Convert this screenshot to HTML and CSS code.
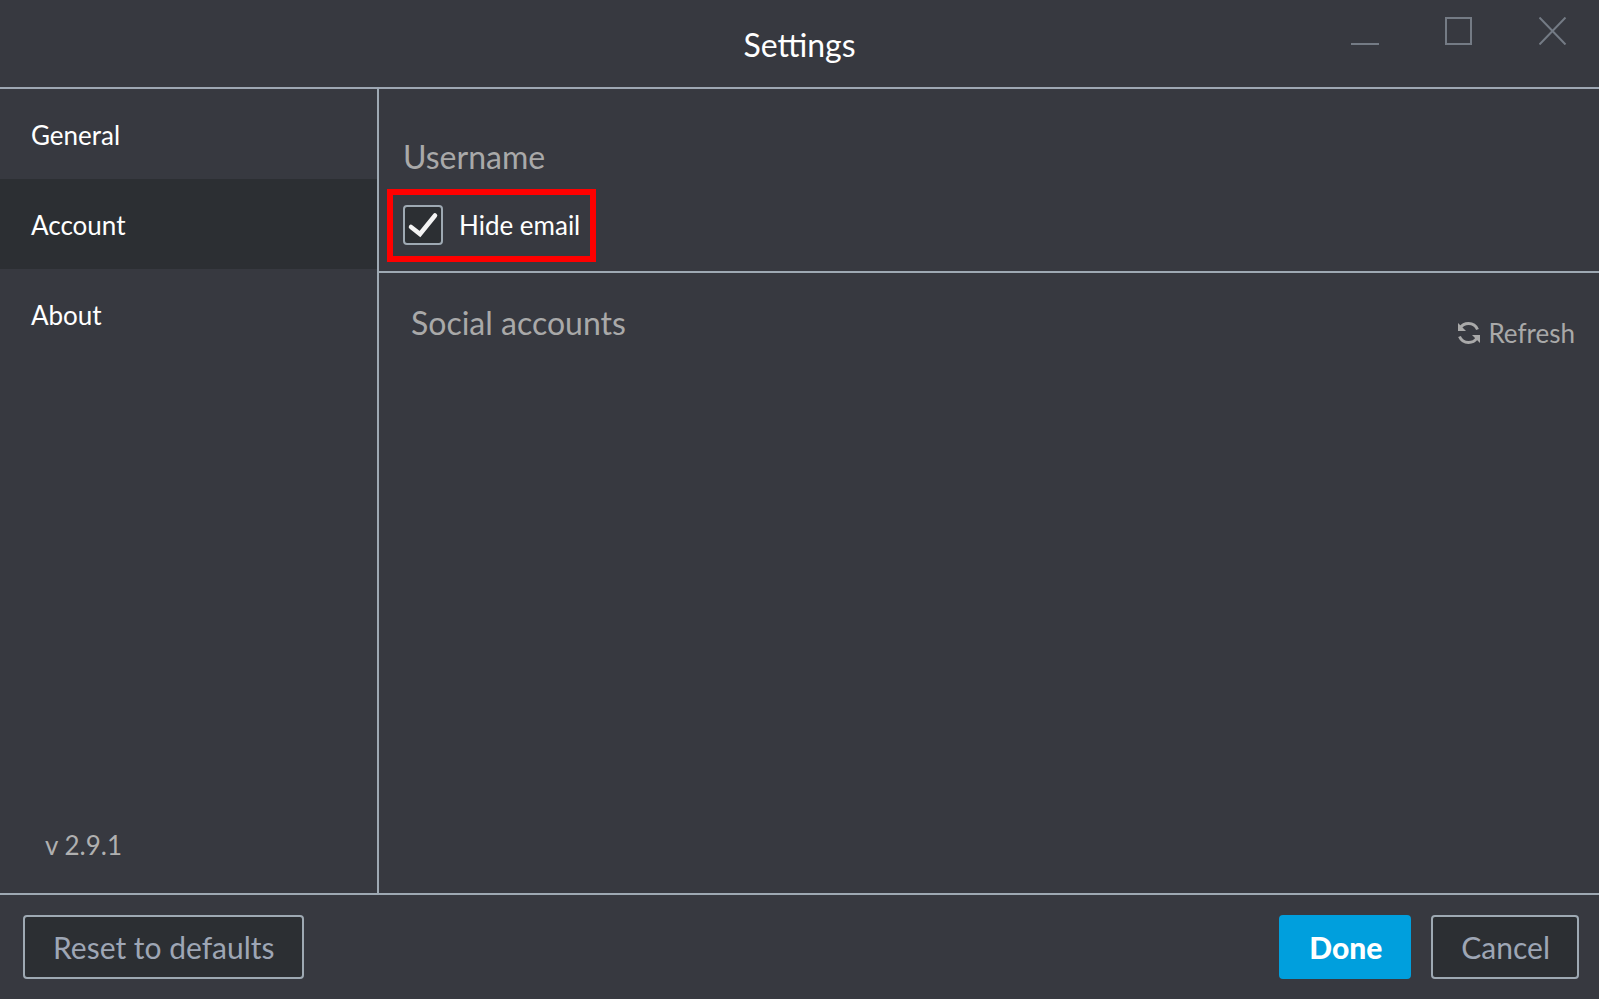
FILE: index.html
```html
<!DOCTYPE html>
<html lang="en">
<head>
<meta charset="utf-8">
<title>Settings</title>
<link rel="stylesheet" href="styles.css">
</head>
<body>
<div class="window">
  <header class="titlebar">
    <h1 class="title">Settings</h1>
    <div class="window-controls">
      <button class="control" type="button" aria-label="Minimize"><svg viewBox="0 0 28 28"><path d="M0 27H28"/></svg></button>
      <button class="control" type="button" aria-label="Maximize"><svg viewBox="0 0 28 28"><path d="M1 1H26V27H1Z"/></svg></button>
      <button class="control" type="button" aria-label="Close"><svg viewBox="0 0 28 28"><path d="M0.500 0.500L26.500 27.500M26.500 0.500L0.500 27.500"/></svg></button>
    </div>
  </header>
  <div class="body">
    <aside class="sidebar">
      <nav class="nav">
        <a class="nav-item" href="#general">General</a>
        <a class="nav-item active" href="#account" aria-current="page">Account</a>
        <a class="nav-item" href="#about">About</a>
      </nav>
      <p class="version">v 2.9.1</p>
    </aside>
    <main class="content">
      <section class="username">
        <h2 class="heading">Username</h2>
        <label class="check-row" for="hide-email">
          <span class="check">
            <input class="check-input" id="hide-email" type="checkbox" checked>
            <svg class="check-mark" viewBox="0 0 40 40"><path d="M8 22L17 29L32 10.500" /></svg>
          </span>
          <span>Hide email</span>
        </label>
      </section>
      <section class="social">
        <h2 class="heading">Social accounts</h2>
        <button class="refresh" type="button">
          <svg class="refresh-icon" viewBox="0 0 24 24"><path class="arc" d="M4 7Q7 2.500 12.500 2.500Q19 2.500 21.500 8.500M21 17Q18 21.500 12.500 21.500Q6 21.500 3.500 15.500"/><path class="tip" d="M2 2V10H10Z M24 22V14H16Z"/></svg>
          <span>Refresh</span>
        </button>
      </section>
    </main>
  </div>
  <footer class="footer">
    <button class="button" type="button">Reset to defaults</button>
    <div class="actions">
      <button class="button primary" type="button">Done</button>
      <button class="button" type="button">Cancel</button>
    </div>
  </footer>
</div>
</body>
</html>
```
FILE: styles.css
```css
* { box-sizing: border-box; }

body {
  margin: 0;
  background: #373940;
  color: #fff;
  font-family: Lato, Carlito, sans-serif;
  font-size: 26px;
  line-height: 32px;
}

button { font: inherit; cursor: pointer; }

h1, h2, p { margin: 0; font-weight: 400; }

.window {
  display: flex;
  flex-direction: column;
  min-height: 100vh;
}

.titlebar {
  display: grid;
  grid-template-columns: 1fr auto 1fr;
  border-bottom: 2px solid #9ea7b3;
  padding: 16px 32px 14px;
}

.title {
  grid-column: 2;
  padding: 9px 0 8px;
  font-size: 32px;
  line-height: 40px;
}

.window-controls {
  display: flex;
  justify-content: flex-end;
  align-items: flex-start;
  gap: 66px;
}

.control {
  width: 28px;
  height: 29px;
  border: 0;
  padding: 0;
  background: none;
}

.control svg {
  display: block;
  width: 28px;
  height: 28px;
  fill: none;
  stroke: #747b85;
  stroke-width: 2;
}

.body { display: flex; flex: 1; }

.sidebar {
  display: flex;
  flex-direction: column;
  justify-content: space-between;
  flex: 0 0 379px;
  border-right: 2px solid #9ea9b3;
}

.nav { display: flex; flex-direction: column; }

.nav-item {
  padding: 30px 31px 28px;
  color: #fff;
  text-decoration: none;
}

.nav-item.active { background: #2c2f33; }

.version { padding: 0 45px 32px; color: #b0b0b0; }

.content { flex: 1; }

.heading {
  color: #a9a9a9;
  font-size: 32px;
  line-height: 40px;
}

.username {
  display: flex;
  flex-direction: column;
  align-items: flex-start;
  gap: 12px;
  border-bottom: 2px solid #9ea9b3;
  padding: 48px 24px 9px 8px;
}

.username .heading { padding-left: 16px; }

.check-row {
  display: flex;
  align-items: center;
  gap: 16px;
  border: 6px solid #f00;
  padding: 10px 10px 11px;
}

.check { display: grid; }

.check-input, .check-mark {
  grid-area: 1 / 1;
  width: 40px;
  height: 40px;
}

.check-input {
  appearance: none;
  margin: 0;
  border: 2px solid #9ea9b3;
  border-radius: 4px;
  background: #2c2f33;
}

.check-mark {
  visibility: hidden;
  pointer-events: none;
  fill: none;
  stroke: #f4f4f4;
  stroke-width: 4.5;
  stroke-linecap: round;
}

.check-input:checked + .check-mark { visibility: visible; }

.social {
  display: flex;
  justify-content: space-between;
  align-items: flex-start;
  padding: 30px 24px 24px 32px;
}

.refresh {
  display: flex;
  align-items: center;
  gap: 8px;
  margin-top: 14px;
  border: 0;
  padding: 0;
  background: none;
  color: #a9a9a9;
}

.refresh-icon { width: 24px; height: 24px; }
.refresh-icon .arc { fill: none; stroke: #a9a9a9; stroke-width: 3; }
.refresh-icon .tip { fill: #a9a9a9; }

.footer {
  display: flex;
  justify-content: space-between;
  border-top: 2px solid #9ea9b3;
  padding: 20px 20px 20px 23px;
}

.actions { display: flex; gap: 20px; }

.button {
  border: 2px solid #9ea9b3;
  border-radius: 4px;
  padding: 12px 27px 12px 28px;
  background: #2c2f33;
  color: #9ea6b5;
  font-size: 30px;
  line-height: 36px;
}

.button.primary {
  border-color: #009fdd;
  background: #009fdd;
  color: #fff;
  font-weight: 900;
}
```
